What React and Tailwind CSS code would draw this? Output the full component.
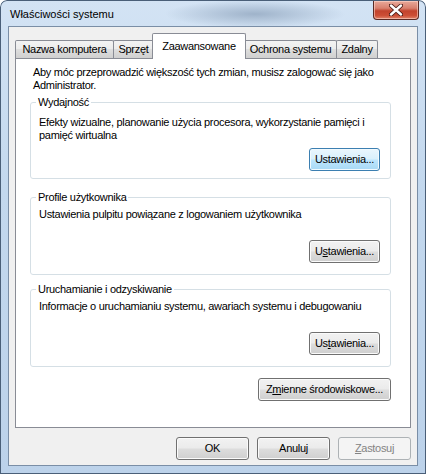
import React from "react";

const btnBase =
  "h-[23px] rounded-[3px] border flex items-center justify-center text-[11px] tracking-[-0.3px] leading-none";
const btnGray =
  "border-[#707070] text-black bg-[linear-gradient(180deg,#f2f2f2_0%,#ebebeb_48%,#dddddd_52%,#cfcfcf_100%)] shadow-[inset_0_0_0_1px_#fbfbfb]";
const btnHot =
  "border-[#3c7fb1] text-black bg-[linear-gradient(180deg,#eaf6fd_0%,#d9f0fc_48%,#bee6fd_52%,#a7d9f5_100%)] shadow-[inset_0_0_0_1px_#f2fafe]";
const btnDisabled = "border-[#adb2b5] text-[#838383] bg-[#f4f4f4]";

function Btn({ children, variant = "gray", className = "" }) {
  const v = variant === "hot" ? btnHot : variant === "disabled" ? btnDisabled : btnGray;
  return <div className={`${btnBase} ${v} ${className}`}>{children}</div>;
}

const tabGray =
  "h-[18px] border-t border-l border-r border-[#898c95] rounded-t-[2px] bg-[linear-gradient(180deg,#f3f3f3_0%,#ebebeb_50%,#dedede_50%,#d0d0d0_100%)] flex items-center justify-center text-[11px] tracking-[-0.3px] leading-none";

export default function App() {
  return (
    <div className="w-[426px] h-[474px] overflow-hidden rounded-t-[7px] bg-[radial-gradient(ellipse_90px_14px_at_255px_14px,#9fb3ca_0%,rgba(159,179,202,0)_100%),linear-gradient(180deg,#d3e3f4_0%,#c3d8ee_40%,#bcd2ea_100%)] shadow-[inset_0_0_0_1px_#4a5f78] font-['Liberation_Sans',Arial,sans-serif] text-black select-none">
      {/* Title bar */}
      <div className="h-[26px] flex items-start justify-between">
        <div className="pl-[10px] pt-[8px] text-[11px] leading-[13px] text-black">Właściwości systemu</div>
        <div className="mr-[7px] mt-px w-[46px] h-[19px] rounded-b-[4px] border border-t-0 border-[#5a2a24] bg-[linear-gradient(180deg,#e9a99a_0%,#d8806e_40%,#c2432d_55%,#cc4e35_80%,#e0836a_100%)] shadow-[inset_0_0_0_1px_rgba(255,220,210,0.55)] flex items-center justify-center">
          <svg width="14" height="12" viewBox="0 0 14 12">
            <path d="M2 1.5 L12 10.5 M12 1.5 L2 10.5" stroke="#4a1a14" strokeWidth="4.2" strokeLinecap="round" />
            <path d="M2 1.5 L12 10.5 M12 1.5 L2 10.5" stroke="#ffffff" strokeWidth="2.4" strokeLinecap="round" />
          </svg>
        </div>
      </div>

      {/* Client area */}
      <div className="mx-[8px] h-[440px] border border-[#7a8ea6] bg-[#f0f0f0] flex flex-col">
        {/* Tabs */}
        <div className="flex items-end pl-[6px] pt-[6px] relative z-10">
          <div className={`${tabGray} w-[99px]`}>Nazwa komputera</div>
          <div className={`${tabGray} w-[41px] -ml-px`}>Sprzęt</div>
          <div className="h-[26px] w-[94px] -ml-[2px] -mb-px bg-white border-t border-l border-r border-[#898c95] rounded-t-[2px] flex items-center justify-center pb-[1px] text-[11px] tracking-[-0.3px] leading-none relative z-10">
            Zaawansowane
          </div>
          <div className={`${tabGray} w-[93px] -ml-[2px]`}>Ochrona systemu</div>
          <div className={`${tabGray} w-[42px] -ml-px`}>Zdalny</div>
        </div>

        {/* Tab panel */}
        <div className="ml-[6px] w-[396px] h-[370px] bg-white border border-[#898c95] text-[11px] tracking-[-0.3px]">
          <div className="pl-[17px] pt-[7px] leading-[13px]">
            <div>Aby móc przeprowadzić większość tych zmian, musisz zalogować się jako</div>
            <div>Administrator.</div>
          </div>

          {/* Wydajność */}
          <fieldset className="ml-[14px] mt-[4px] w-[361px] border border-[#d5dfe5] rounded-[3px] pb-[7px]">
            <legend className="ml-[5px] px-[2px] leading-[13px]">Wydajność</legend>
            <div className="pl-[8px] pt-[7px] leading-[13px]">
              <div>Efekty wizualne, planowanie użycia procesora, wykorzystanie pamięci i</div>
              <div>pamięć wirtualna</div>
            </div>
            <div className="flex justify-end pr-[10px] mt-[6px]">
              <Btn variant="hot" className="w-[71px]">Ustawienia...</Btn>
            </div>
          </fieldset>

          {/* Profile użytkownika */}
          <fieldset className="ml-[14px] mt-[12px] w-[361px] border border-[#d5dfe5] rounded-[3px] pb-[11px]">
            <legend className="ml-[5px] px-[2px] leading-[13px]">Profile użytkownika</legend>
            <div className="pl-[8px] pt-[4px] leading-[13px]">
              <div>Ustawienia pulpitu powiązane z logowaniem użytkownika</div>
            </div>
            <div className="flex justify-end pr-[10px] mt-[19px]">
              <Btn className="w-[71px]">
                U<span className="underline">s</span>tawienia...
              </Btn>
            </div>
          </fieldset>

          {/* Uruchamianie i odzyskiwanie */}
          <fieldset className="ml-[14px] mt-[8px] w-[361px] border border-[#d5dfe5] rounded-[3px] pb-[11px]">
            <legend className="ml-[5px] px-[2px] leading-[13px]">Uruchamianie i odzyskiwanie</legend>
            <div className="pl-[8px] pt-[4px] leading-[13px]">
              <div>Informacje o uruchamianiu systemu, awariach systemu i debugowaniu</div>
            </div>
            <div className="flex justify-end pr-[10px] mt-[19px]">
              <Btn className="w-[71px]">
                Us<span className="underline">t</span>awienia...
              </Btn>
            </div>
          </fieldset>

          <div className="ml-[14px] w-[361px] mt-[11px] flex justify-end">
            <Btn className="w-[133px]">
              Z<span className="underline">m</span>ienne środowiskowe...
            </Btn>
          </div>
        </div>

        {/* Dialog buttons */}
        <div className="mt-[9px] flex justify-end gap-[8px] pr-[6px]">
          <Btn className="w-[73px]">OK</Btn>
          <Btn className="w-[73px]">Anuluj</Btn>
          <Btn variant="disabled" className="w-[73px]">
            <span className="underline">Z</span>astosuj
          </Btn>
        </div>
      </div>
    </div>
  );
}
